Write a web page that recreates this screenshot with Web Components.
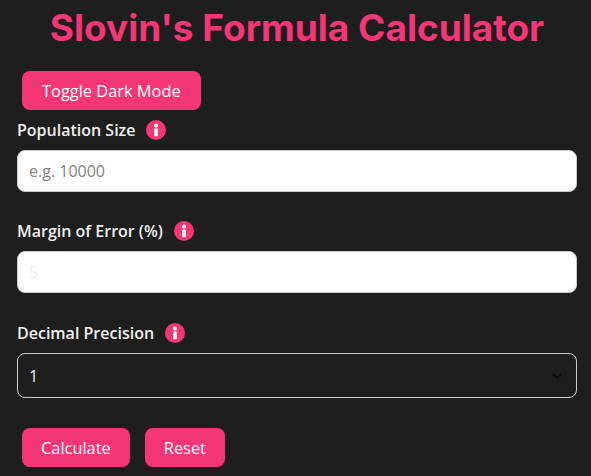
<!DOCTYPE html>
<html>
<head>
<meta charset="utf-8">
<style>
  html, body { margin: 0; background: #1e1e1e; height: 100%; overflow: hidden; }
  body { font-family: "Open Sans", "Noto Sans", sans-serif; color: #f0f0f0; }
</style>
</head>
<body>
<calc-app>
  <pink-button style="margin-left:5px">Toggle Dark Mode</pink-button>
  <form-field label="Population Size" style="margin-top:9px">
    <text-box placeholder="e.g. 10000"></text-box>
  </form-field>
  <form-field label="Margin of Error (%)" style="margin-top:28px">
    <text-box value="5"></text-box>
  </form-field>
  <form-field label="Decimal Precision" style="margin-top:29px">
    <select-box value="1"></select-box>
  </form-field>
  <button-row>
    <pink-button style="padding:0 19px">Calculate</pink-button>
    <pink-button style="padding:0 19px">Reset</pink-button>
  </button-row>
</calc-app>

<script>
class CalcApp extends HTMLElement {
  connectedCallback() {
    const shadow = this.attachShadow({ mode: 'open' });
    shadow.innerHTML = `
      <style>
        :host { display: block; padding: 0 14px 0 17px; }
        h1 {
          margin: 0 0 18px;
          padding-top: 3px;
          height: 50px;
          font: 700 37px/50px Inter, sans-serif;
          color: #f43676;
          text-align: center;
          white-space: nowrap;
        }
      </style>
      <h1>Slovin's Formula Calculator</h1>
      <slot></slot>
    `;
  }
}

class PinkButton extends HTMLElement {
  connectedCallback() {
    const shadow = this.attachShadow({ mode: 'open' });
    shadow.innerHTML = `
      <style>
        :host {
          display: inline-flex;
          align-items: center;
          height: 39px;
          padding: 0 20px;
          border-radius: 8px;
          background: #f43676;
          color: #fff;
          font-size: 16.4px;
          white-space: nowrap;
        }
      </style>
      <slot></slot>
    `;
  }
}

class FormField extends HTMLElement {
  connectedCallback() {
    const shadow = this.attachShadow({ mode: 'open' });
    shadow.innerHTML = `
      <style>
        :host { display: block; }
        .label {
          display: flex;
          align-items: center;
          gap: 10px;
          height: 22px;
          margin-bottom: 9px;
          font-size: 16px;
          font-weight: 600;
          color: #f0f0f0;
        }
        svg { width: 20px; height: 20px; display: block; margin-left: 1px; }
      </style>
      <div class="label">
        <span>${this.getAttribute('label')}</span>
        <svg viewBox="0 0 20 20">
          <circle cx="10" cy="10" r="10" fill="#f43676"/>
          <circle cx="10" cy="5.4" r="2" fill="#fff"/>
          <rect x="8.2" y="8.6" width="3.6" height="7.6" rx=".6" fill="#fff"/>
        </svg>
      </div>
      <slot></slot>
    `;
  }
}

class TextBox extends HTMLElement {
  connectedCallback() {
    const shadow = this.attachShadow({ mode: 'open' });
    const value = this.getAttribute('value');
    shadow.innerHTML = `
      <style>
        :host {
          display: flex;
          align-items: center;
          box-sizing: border-box;
          height: 42px;
          padding: 0 11px;
          background: #fff;
          border: 1px solid #ccc;
          border-radius: 8px;
          font-size: 16px;
        }
        .hint { color: #808080; }
        .value { color: #eee; }
      </style>
      <span class="${value ? 'value' : 'hint'}">${value || this.getAttribute('placeholder')}</span>
    `;
  }
}

class SelectBox extends HTMLElement {
  connectedCallback() {
    const shadow = this.attachShadow({ mode: 'open' });
    shadow.innerHTML = `
      <style>
        :host {
          display: flex;
          align-items: center;
          justify-content: space-between;
          box-sizing: border-box;
          height: 45px;
          padding: 0 14px 0 11px;
          border: 1px solid #ccc;
          border-radius: 8px;
          font-size: 16px;
          color: #f0f0f0;
        }
        svg { width: 10px; height: 6px; display: block; }
      </style>
      <span>${this.getAttribute('value')}</span>
      <svg viewBox="0 0 10 6"><path d="M.8.8 5 5 9.2.8" fill="none" stroke="#0c0c0c" stroke-width="1.8"/></svg>
    `;
  }
}

class ButtonRow extends HTMLElement {
  connectedCallback() {
    const shadow = this.attachShadow({ mode: 'open' });
    shadow.innerHTML = `
      <style>
        :host { display: flex; gap: 15px; margin: 30px 0 0 5px; }
      </style>
      <slot></slot>
    `;
  }
}

customElements.define('calc-app', CalcApp);
customElements.define('pink-button', PinkButton);
customElements.define('form-field', FormField);
customElements.define('text-box', TextBox);
customElements.define('select-box', SelectBox);
customElements.define('button-row', ButtonRow);
</script>
</body>
</html>
